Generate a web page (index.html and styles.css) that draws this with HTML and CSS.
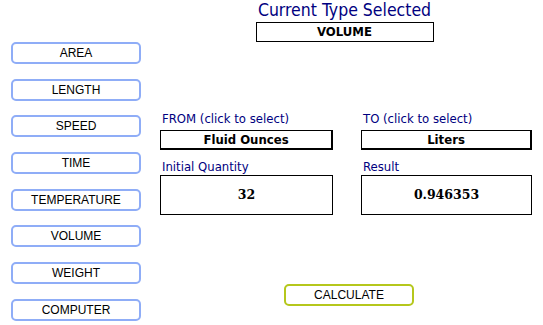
FILE: index.html
```html
<!DOCTYPE html>
<html lang="en">

<head>
    <meta charset="UTF-8">
    <title>Unit Converter</title>
    <link rel="stylesheet" href="styles.css">
</head>

<body>
    <div class="app">
        <nav class="sidebar">
            <button class="type-btn">AREA</button>
            <button class="type-btn">LENGTH</button>
            <button class="type-btn">SPEED</button>
            <button class="type-btn">TIME</button>
            <button class="type-btn">TEMPERATURE</button>
            <button class="type-btn">VOLUME</button>
            <button class="type-btn">WEIGHT</button>
            <button class="type-btn">COMPUTER</button>
        </nav>

        <main class="main">
            <div class="header">
                <h1 class="title">Current Type Selected</h1>
                <div class="type-box">VOLUME</div>
            </div>

            <div class="fields">
                <div class="field">
                    <div class="label">FROM (click to select)</div>
                    <div class="unit-box">Fluid Ounces</div>
                </div>
                <div class="field">
                    <div class="label">TO (click to select)</div>
                    <div class="unit-box">Liters</div>
                </div>
                <div class="field field-value">
                    <div class="label">Initial Quantity</div>
                    <div class="value-box">32</div>
                </div>
                <div class="field field-value">
                    <div class="label">Result</div>
                    <div class="value-box">0.946353</div>
                </div>
            </div>

            <div class="actions">
                <button class="calc-btn">CALCULATE</button>
            </div>
        </main>
    </div>
</body>

</html>
```

FILE: styles.css
```css
body {
    margin: 0;
    background: #ffffff;
    color: #000;
    font-family: 'Liberation Sans', Arial, sans-serif;
}

.app {
    display: flex;
}

.sidebar {
    display: flex;
    flex-direction: column;
    gap: 14.7px;
    width: 130px;
    padding: 42px 0 0 11px;
}

.type-btn {
    height: 22px;
    padding: 0;
    background: #fff;
    border: 2px solid #8fadf7;
    border-radius: 5px;
    font-family: 'Liberation Sans', Arial, sans-serif;
    font-size: 12px;
    color: #000;
    cursor: pointer;
}

.main {
    width: 372px;
    margin-left: 19px;
}

.header {
    display: flex;
    flex-direction: column;
    align-items: center;
    padding-right: 3px;
}

.title {
    margin: 0;
    height: 22px;
    font-family: 'DejaVu Sans Condensed', 'DejaVu Sans', sans-serif;
    font-weight: normal;
    font-size: 17.5px;
    line-height: 20px;
    color: #000080;
}

.type-box {
    width: 176px;
    height: 18px;
    border: 1px solid #000;
    text-align: center;
    font-family: 'DejaVu Sans Condensed', 'DejaVu Sans', sans-serif;
    font-weight: bold;
    font-size: 13px;
    line-height: 18px;
}

.fields {
    display: grid;
    grid-template-columns: 173px 171px;
    column-gap: 28px;
    row-gap: 9px;
    margin-top: 69px;
}

.label {
    font-family: 'DejaVu Sans Condensed', 'DejaVu Sans', sans-serif;
    font-size: 13px;
    line-height: 16px;
    color: #000080;
    padding-left: 2px;
    margin-bottom: 3px;
}

.field-value .label {
    margin-bottom: 0;
}

.unit-box {
    height: 17px;
    border: 1px solid #000;
    border-right-width: 2px;
    border-bottom-width: 2px;
    text-align: center;
    font-family: 'DejaVu Sans Condensed', 'DejaVu Sans', sans-serif;
    font-weight: bold;
    font-size: 13px;
    line-height: 17px;
}

.value-box {
    height: 38px;
    border: 1px solid #000;
    text-align: center;
    font-family: 'DejaVu Serif', serif;
    font-weight: bold;
    font-size: 12.5px;
    line-height: 38px;
}

.actions {
    display: flex;
    justify-content: center;
    padding-left: 6px;
    margin-top: 69px;
}

.calc-btn {
    width: 130px;
    height: 22px;
    padding: 0;
    background: #fff;
    border: 2px solid #b5c71c;
    border-radius: 5px;
    font-family: 'Liberation Sans', Arial, sans-serif;
    font-size: 12px;
    color: #000;
    cursor: pointer;
}
```
